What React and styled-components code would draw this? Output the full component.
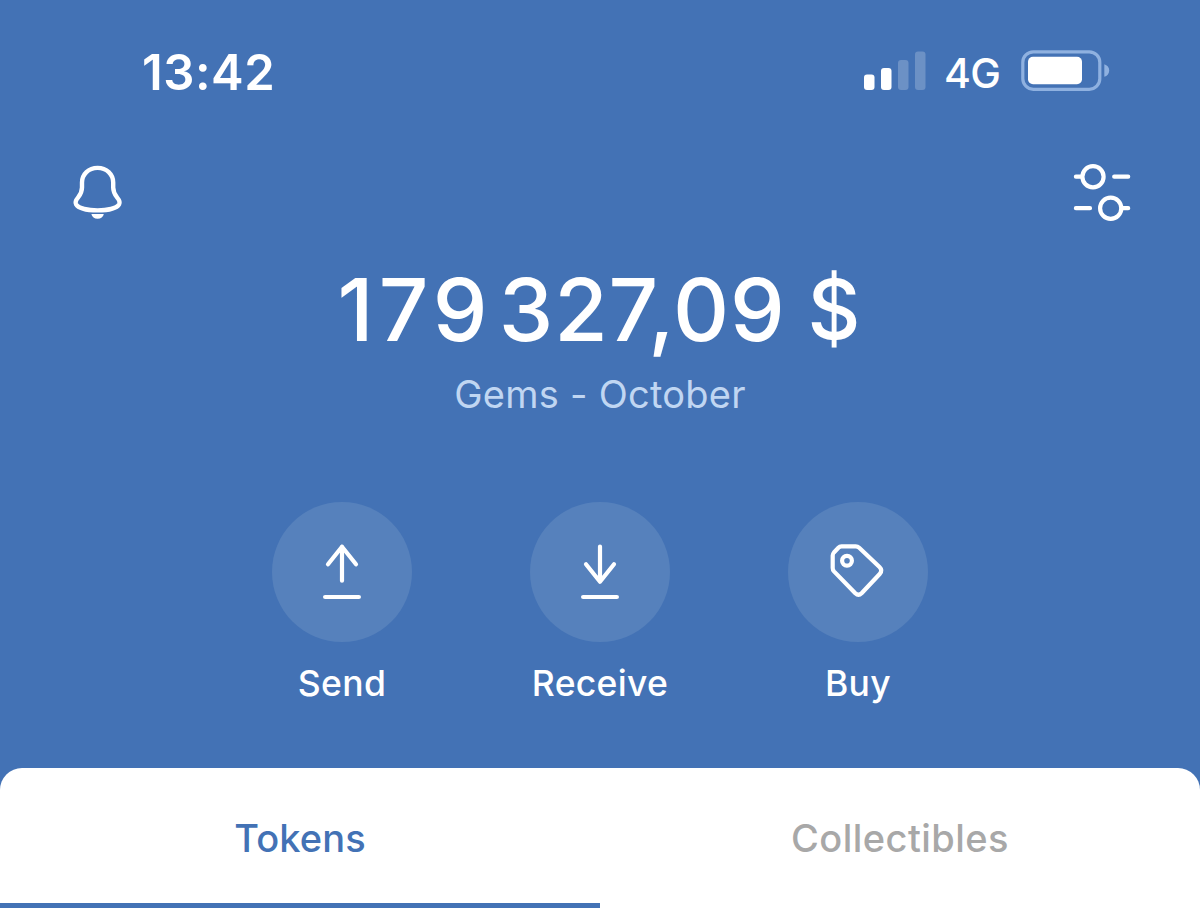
import React from 'react';
import styled, { createGlobalStyle, ThemeProvider } from 'styled-components';

const theme = {
  colors: {
    blue: '#4372b5',
    circle: '#5681bc',
    white: '#ffffff',
    subtitle: '#c0d6f2',
    grey: '#a8a8a8',
  },
};

const SignalIcon = () => (
  <svg width="64" height="42" viewBox="0 0 64 42" fill="#fff">
    <rect x="1" y="24.5" width="10.5" height="15.5" rx="3" />
    <rect x="18" y="18" width="10.5" height="22" rx="3" />
    <rect x="35" y="10" width="10.5" height="30" rx="3" opacity="0.22" />
    <rect x="52" y="1.5" width="10.5" height="38.5" rx="3" opacity="0.22" />
  </svg>
);

const BatteryIcon = () => (
  <svg width="90" height="42" viewBox="0 0 90 42">
    <rect
      x="2.8"
      y="1.9"
      width="77"
      height="37.4"
      rx="10.5"
      fill="none"
      stroke="#8fb1e0"
      strokeWidth="3.2"
    />
    <rect x="8" y="6.8" width="54" height="27.4" rx="5" fill="#fff" />
    <path d="M84.3 14.2C87.3 15 89.2 17.4 89.2 20.5S87.3 26 84.3 26.8Z" fill="#8fb1e0" />
  </svg>
);

const BellIcon = () => (
  <svg width="80" height="80" viewBox="0 0 80 80">
    <path
      d="M37.6 17.9C28.6 17.9 22 24.2 22 32.6V37.5C22 42 20.8 44.2 18 47.6C15.7 50.3 14.9 52.2 16.1 54.3C18.6 58.4 28 60.4 37.6 60.4S56.6 58.4 59.1 54.3C60.3 52.2 59.5 50.3 57.2 47.6C54.4 44.2 53.2 42 53.2 37.5V32.6C53.2 24.2 46.6 17.9 37.6 17.9Z"
      fill="none"
      stroke="#fff"
      strokeWidth="4.4"
      strokeLinejoin="round"
    />
    <path d="M31.4 64H43.8C43.2 66.8 40.9 68.8 37.6 68.8S32 66.8 31.4 64Z" fill="#fff" />
  </svg>
);

const SettingsIcon = () => (
  <svg
    width="80"
    height="80"
    viewBox="0 0 80 80"
    fill="none"
    stroke="#fff"
    strokeWidth="4.2"
    strokeLinecap="round"
  >
    <circle cx="33" cy="26.7" r="10.6" />
    <circle cx="50.7" cy="58.2" r="10.6" />
    <path d="M15.9 26.7H22M54.2 26.7H68.2M15.9 58.2H30M61.5 58.2H68.2" />
  </svg>
);

const SendIcon = () => (
  <ActionSvg>
    <path d="M70 78.7V44.7M56 62.3L70 44.7L84 62.3M53.1 95H86.9" />
  </ActionSvg>
);

const ReceiveIcon = () => (
  <ActionSvg>
    <path d="M70 44.6V79.7M56 62.2L70 79.7L84 62.2M53.1 95H86.9" />
  </ActionSvg>
);

const BuyIcon = () => (
  <ActionSvg>
    <path d="M53.5 44.3H67.7Q69.7 44.3 71.2 45.7L91.5 65.1Q94.9 68.5 91.7 72L73.6 91.3Q70.5 94.3 67.3 91.3L46 69.4Q44.7 68 44.7 66V53.5Q44.7 51.9 45.9 50.5L50.4 45.7Q51.7 44.3 53.5 44.3Z" />
    <circle cx="59" cy="58.8" r="4.9" />
  </ActionSvg>
);

const App = () => {
  const [tab, setTab] = React.useState('tokens');

  return (
    <ThemeProvider theme={theme}>
      <GlobalStyle />
      <Screen>
        <StatusBar>
          <Time>13:42</Time>
          <Status>
            <SignalIcon />
            <Network>4G</Network>
            <BatteryIcon />
          </Status>
        </StatusBar>

        <TopBar>
          <IconButton aria-label="Notifications">
            <BellIcon />
          </IconButton>
          <IconButton aria-label="Settings">
            <SettingsIcon />
          </IconButton>
        </TopBar>

        <Balance>
          <Amount>
            <Part $spacing="5.2px">179</Part>
            <Part $spacing="0.8px" $gap="6px">
              327,09
            </Part>
            <Part $gap="22px" $size="82px">
              $
            </Part>
          </Amount>
          <WalletName>Gems - October</WalletName>
        </Balance>

        <Actions>
          <Action>
            <Circle>
              <SendIcon />
            </Circle>
            <Label>Send</Label>
          </Action>
          <Action>
            <Circle>
              <ReceiveIcon />
            </Circle>
            <Label>Receive</Label>
          </Action>
          <Action>
            <Circle>
              <BuyIcon />
            </Circle>
            <Label>Buy</Label>
          </Action>
        </Actions>

        <Tabs>
          <Tab
            $active={tab === 'tokens'}
            $spacing="0.1px"
            onClick={() => setTab('tokens')}
          >
            Tokens
          </Tab>
          <Tab
            $active={tab === 'collectibles'}
            $spacing="0.45px"
            onClick={() => setTab('collectibles')}
          >
            Collectibles
          </Tab>
        </Tabs>
      </Screen>
    </ThemeProvider>
  );
};

const GlobalStyle = createGlobalStyle`
  * {
    box-sizing: border-box;
  }

  body {
    margin: 0;
    font-family: Inter, 'Liberation Sans', sans-serif;
  }

  button {
    padding: 0;
    border: none;
    background: none;
    font-family: inherit;
  }

  svg {
    display: block;
  }
`;

const Screen = styled.div`
  display: flex;
  flex-direction: column;
  width: 1200px;
  height: 908px;
  overflow: hidden;
  color: ${({ theme }) => theme.colors.white};
  background-color: ${({ theme }) => theme.colors.blue};
`;

const StatusBar = styled.header`
  display: flex;
  justify-content: space-between;
  height: 150px;
  padding: 50px 90px 0 142px;
`;

const Time = styled.span`
  font-size: 49px;
  font-weight: 600;
  line-height: 46px;
  letter-spacing: 0.5px;
`;

const Status = styled.div`
  display: flex;
  align-items: flex-start;
`;

const Network = styled.span`
  width: 93px;
  padding-left: 17px;
  font-size: 41px;
  font-weight: 500;
  line-height: 47px;
  letter-spacing: -0.6px;
`;

const TopBar = styled.nav`
  display: flex;
  justify-content: space-between;
  height: 110px;
  padding: 0 60px;
`;

const IconButton = styled.button`
  width: 80px;
  height: 80px;
`;

const Balance = styled.section`
  display: flex;
  flex-direction: column;
  align-items: center;
  height: 242px;
`;

const Amount = styled.div`
  display: flex;
  padding-right: 2px;
  font-size: 87px;
  font-weight: 500;
  line-height: 100px;
`;

const Part = styled.span`
  margin-left: ${(props) => props.$gap || 0};
  font-size: ${(props) => props.$size || 'inherit'};
  letter-spacing: ${(props) => props.$spacing || 0};
`;

const WalletName = styled.div`
  color: ${({ theme }) => theme.colors.subtitle};
  font-size: 38px;
  line-height: 68px;
  letter-spacing: 0.25px;
`;

const Actions = styled.section`
  display: flex;
  justify-content: center;
  gap: 118px;
  height: 266px;
`;

const Action = styled.div`
  display: flex;
  flex-direction: column;
  align-items: center;
  width: 140px;
`;

const Circle = styled.button`
  width: 140px;
  height: 140px;
  border-radius: 50%;
  background-color: ${({ theme }) => theme.colors.circle};
`;

const ActionSvg = styled.svg.attrs({ viewBox: '0 0 140 140' })`
  width: 140px;
  height: 140px;
  fill: none;
  stroke: ${({ theme }) => theme.colors.white};
  stroke-width: 4.2px;
  stroke-linecap: round;
  stroke-linejoin: round;
`;

const Label = styled.span`
  font-size: 35.5px;
  font-weight: 500;
  line-height: 84px;
  letter-spacing: 0.3px;
`;

const Tabs = styled.div`
  display: flex;
  height: 140px;
  border-radius: 22px 22px 0 0;
  background-color: ${({ theme }) => theme.colors.white};
`;

const Tab = styled.button`
  flex: 1;
  padding-top: 4px;
  border-bottom: 5px solid
    ${(props) => (props.$active ? props.theme.colors.blue : 'transparent')};
  color: ${(props) => (props.$active ? props.theme.colors.blue : props.theme.colors.grey)};
  font-size: 38px;
  font-weight: 500;
  letter-spacing: ${(props) => props.$spacing};
`;

export default App;
